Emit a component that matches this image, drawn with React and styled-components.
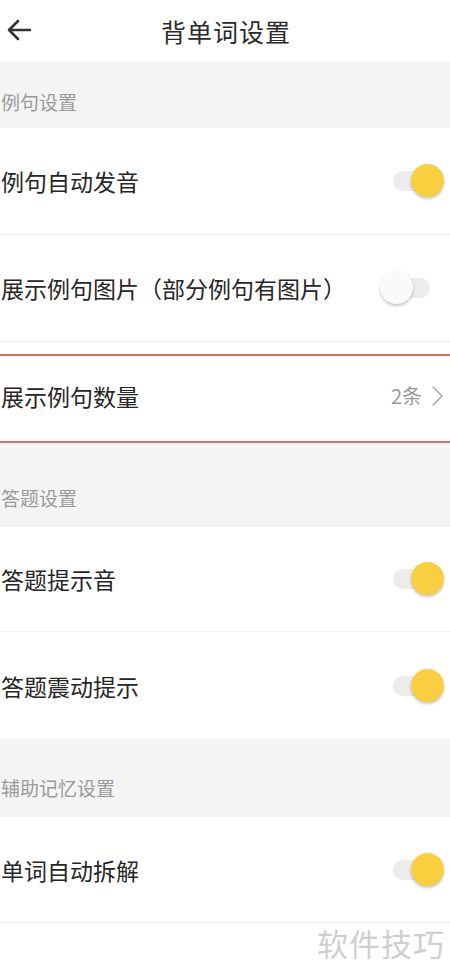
import React from "react";
import styled, { createGlobalStyle } from "styled-components";

const GlobalStyle = createGlobalStyle`
  body {
    margin: 0;
    background: #fff;
    font-family: "Noto Sans CJK SC", "Noto Sans", sans-serif;
  }
`;

const sections = [
  {
    title: "例句设置",
    height: 66,
    rows: [
      { label: "例句自动发音", type: "switch", on: true, height: 107 },
      { label: "展示例句图片（部分例句有图片）", type: "switch", on: false, height: 107 },
      { label: "展示例句数量", type: "value", value: "2条", height: 89, selected: true },
    ],
  },
  {
    title: "答题设置",
    height: 84,
    rows: [
      { label: "答题提示音", type: "switch", on: true, height: 105 },
      { label: "答题震动提示", type: "switch", on: true, height: 108 },
    ],
  },
  {
    title: "辅助记忆设置",
    height: 77,
    rows: [{ label: "单词自动拆解", type: "switch", on: true, height: 106 }],
  },
];

const App = () => {
  return (
    <Page>
      <GlobalStyle />
      <Header>
        <BackButton>
          <svg width="26" height="22" viewBox="0 0 26 22" fill="none">
            <path
              d="M24 11H3M12 2L3 11l9 9"
              stroke="#333"
              strokeWidth="2.6"
              strokeLinecap="round"
              strokeLinejoin="round"
            />
          </svg>
        </BackButton>
        <Title>背单词设置</Title>
      </Header>
      {sections.map((section) => (
        <div key={section.title}>
          <SectionTitle $height={section.height}>{section.title}</SectionTitle>
          {section.rows.map((row) => (
            <Row key={row.label} $height={row.height} $selected={row.selected}>
              <Label>{row.label}</Label>
              {row.type === "switch" ? (
                <Switch $on={row.on}>
                  <Knob $on={row.on} />
                </Switch>
              ) : (
                <Value>
                  {row.value}
                  <svg width="14" height="22" viewBox="0 0 14 22" fill="none">
                    <path
                      d="M3 2l9 9-9 9"
                      stroke="#aaa"
                      strokeWidth="1.6"
                      strokeLinecap="round"
                      strokeLinejoin="round"
                    />
                  </svg>
                </Value>
              )}
            </Row>
          ))}
        </div>
      ))}
      <Footer>
        <Watermark>软件技巧</Watermark>
      </Footer>
    </Page>
  );
};

const Page = styled.div`
  width: 450px;
  height: 976px;
  overflow: hidden;
  background: #fff;
`;

const Header = styled.div`
  height: 62px;
  display: flex;
  align-items: center;
  justify-content: center;
  position: relative;
`;

const BackButton = styled.div`
  position: absolute;
  left: 6px;
  top: 19px;
  display: flex;
`;

const Title = styled.div`
  font-size: 25px;
  color: #2a2a2a;
  letter-spacing: 1px;
  margin-left: 2px;
`;

const SectionTitle = styled.div`
  height: ${(p) => p.$height}px;
  background: #f4f4f4;
  color: #9a9a9a;
  font-size: 19px;
  display: flex;
  align-items: flex-end;
  padding: 0 0 ${(p) => (p.$height > 70 ? 16 : 13)}px 1px;
  box-sizing: border-box;
`;

const Row = styled.div`
  height: ${(p) => p.$height}px;
  display: flex;
  align-items: center;
  justify-content: space-between;
  box-sizing: border-box;
  padding: 0 6px 0 1px;
  border-bottom: 1px solid #f1f1f1;
  ${(p) =>
    p.$selected &&
    `
    margin-top: 12px;
    padding-bottom: 6px;
    border-top: 2px solid #e06a68;
    border-bottom: 2px solid #e06a68;
  `}
`;

const Label = styled.div`
  font-size: 23px;
  color: #262626;
`;

const Switch = styled.div`
  width: 37px;
  height: 20px;
  border-radius: 10px;
  background: #ececec;
  position: relative;
  margin-right: 14px;
`;

const Knob = styled.div`
  position: absolute;
  top: -7px;
  left: ${(p) => (p.$on ? 18 : -13)}px;
  width: 33px;
  height: 33px;
  border-radius: 50%;
  background: ${(p) => (p.$on ? "#f9cf40" : "#fafafa")};
  box-shadow: 0 2px 3px rgba(0, 0, 0, 0.22);
`;

const Value = styled.div`
  display: flex;
  align-items: center;
  gap: 8px;
  font-size: 20px;
  color: #9a9a9a;
  margin-right: 0;
`;

const Footer = styled.div`
  display: flex;
  justify-content: flex-end;
  padding: 0 5px 0 0;
`;

const Watermark = styled.div`
  font-size: 31px;
  color: #cfcfcf;
  letter-spacing: 1px;
  margin-top: -3px;
`;

export default App;
